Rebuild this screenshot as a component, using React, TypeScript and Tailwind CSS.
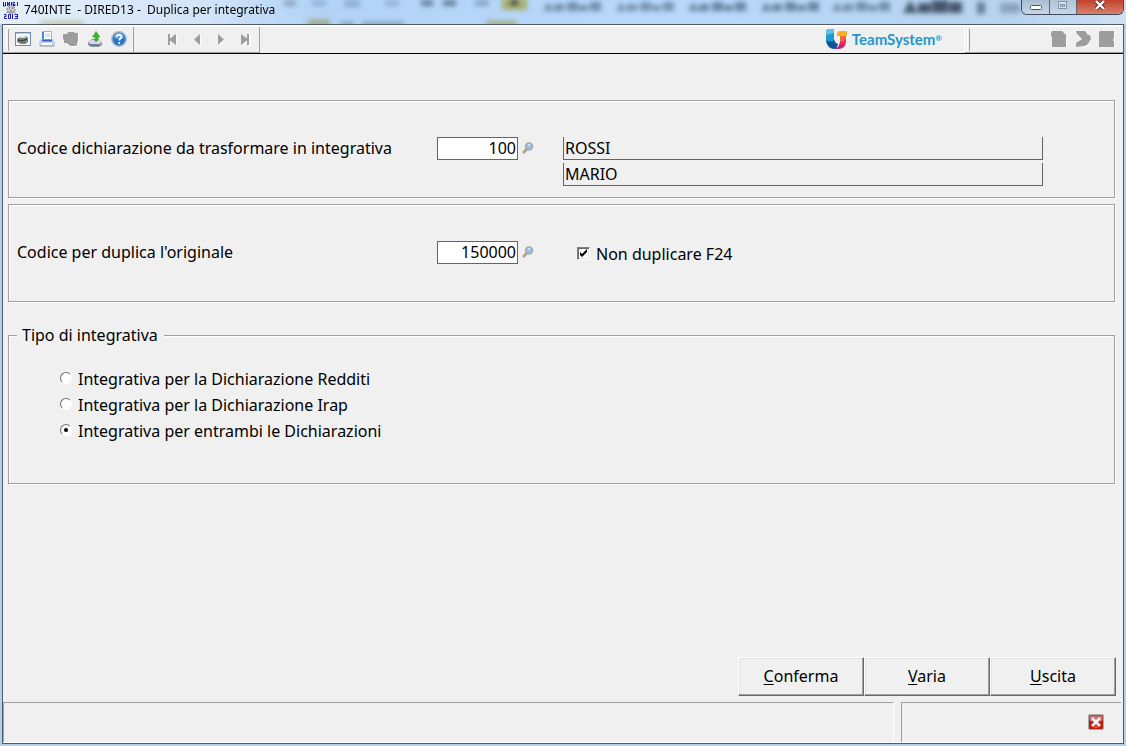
import React, { useState } from "react";

type SvgProps = { children: React.ReactNode; size?: number };

function Glyph({ children, size = 16 }: SvgProps) {
  return (
    <svg width={size} height={size} viewBox={`0 0 ${size} ${size}`} aria-hidden="true">
      {children}
    </svg>
  );
}

function ToolButton({ label, children }: { label: string; children: React.ReactNode }) {
  return (
    <button type="button" aria-label={label} className="flex h-6 w-6 items-center justify-center">
      {children}
    </button>
  );
}

function AppIcon() {
  return (
    <svg width="16" height="18" viewBox="0 0 16 18" aria-hidden="true">
      <rect width="16" height="18" fill="#e8f0fa" />
      <path d="M.5 1v4h2V1M4.500 5V1l2 4V1M8.500 1v4M12 1.500h-2v2h2v1h-2M14.500 1v4" stroke="#1a1aae" fill="none" />
      <circle cx="8" cy="8.500" r="4" fill="#c9c9c9" stroke="#777" strokeDasharray="2 1" />
      <path d="M6 7h1M9 7h1M7 10h2" stroke="#555" />
      <path d="M3 12l2-1h6l2 1" stroke="#999" fill="none" />
      <path d="M1 13.500h2v2H1.500v2H4M5.500 13.500h2v4h-2zM9.500 13v5M11.500 13.500h3v4h-3M12 15.500h2" stroke="#1616c4" fill="none" />
    </svg>
  );
}

function TitleBackdrop() {
  return (
    <svg className="absolute inset-0 h-full w-full" viewBox="0 0 1126 24" preserveAspectRatio="none" aria-hidden="true">
      <defs>
        <linearGradient id="sky" x1="0" x2="1" y1="0" y2="0">
          <stop offset="0" stopColor="#e4effb" />
          <stop offset=".18" stopColor="#d3e4f7" />
          <stop offset=".28" stopColor="#b3d3f6" />
          <stop offset=".6" stopColor="#b8d9fb" />
          <stop offset=".9" stopColor="#b8d3ef" />
          <stop offset="1" stopColor="#cfe0f2" />
        </linearGradient>
        <filter id="soft" x="-20%" y="-100%" width="140%" height="300%">
          <feGaussianBlur stdDeviation="2.500" />
        </filter>
      </defs>
      <rect width="1126" height="24" fill="url(#sky)" />
      <g filter="url(#soft)" fill="#5b7590">
        <rect x="284" y="0" width="12" height="6" opacity=".5" />
        <rect x="312" y="0" width="14" height="6" opacity=".35" />
        <rect x="344" y="0" width="16" height="7" opacity=".4" />
        <rect x="385" y="0" width="14" height="6" opacity=".35" />
        <rect x="421" y="0" width="12" height="6" opacity=".9" />
        <rect x="443" y="0" width="13" height="6" opacity=".9" />
        <rect x="475" y="0" width="14" height="6" opacity=".5" />
        <rect x="502" y="-2" width="25" height="12" fill="#a9ad6d" />
        <rect x="510" y="-1" width="8" height="7" fill="#455040" />
        <rect x="40" y="21" width="44" height="5" fill="#a9ad6d" opacity=".6" />
        <rect x="308" y="20" width="22" height="6" fill="#a0a878" />
        <rect x="340" y="22" width="14" height="4" opacity=".6" />
        <rect x="362" y="22" width="42" height="4" opacity=".6" />
        <rect x="486" y="21" width="31" height="6" fill="#a9ad7d" />
        <path d="M543 11l5-9 6 9zM554 4h10v7h-10zM567 2h11v9h-11zM579 5h9v6h-9zM590 2h11v9h-11z" opacity=".75" />
        <path d="M616 11l5-9 6 9zM627 4h10v7h-10zM640 2h11v9h-11zM652 5h9v6h-9zM663 2h11v9h-11z" opacity=".7" />
        <path d="M688 11l5-9 6 9zM699 4h10v7h-10zM712 2h11v9h-11zM724 5h9v6h-9zM735 2h11v9h-11z" opacity=".85" />
        <path d="M761 11l5-9 6 9zM772 4h10v7h-10zM785 2h11v9h-11zM797 5h9v6h-9zM808 2h11v9h-11z" opacity=".85" />
        <path d="M832 11l5-9 6 9zM843 4h10v7h-10zM856 2h11v9h-11zM868 5h9v6h-9zM879 2h11v9h-11z" opacity=".75" />
        <path d="M903 13l7-13 8 13zM918 3h13v10h-13zM932 0h16v13h-16zM949 2h13v11h-13z" fill="#34485c" opacity=".9" />
        <rect x="977" y="2" width="8" height="12" opacity=".9" />
        <rect x="1000" y="3" width="20" height="10" opacity=".5" />
      </g>
    </svg>
  );
}

function TitleBar() {
  return (
    <header className="relative flex h-6 shrink-0 items-start justify-between overflow-hidden">
      <TitleBackdrop />
      <div className="relative flex items-center gap-[5px] pl-[3px]">
        <AppIcon />
        <h1 className="whitespace-pre text-xs leading-5">{"740INTE  - DIRED13 -  Duplica per integrativa"}</h1>
      </div>
      <div className="relative mr-0.5 flex h-[15px] overflow-hidden rounded-b-md border border-t-0 border-[#3f4a58]">
        <button type="button" aria-label="Riduci a icona" className="flex w-7 justify-center border-r border-[#5a6573] bg-linear-to-b from-[#a9bdd3] to-[#c6d7e8]">
          <svg width="14" height="14" aria-hidden="true"><rect x="1.500" y="5.500" width="11" height="4" rx="1" fill="#fff" stroke="#4c5363" /></svg>
        </button>
        <button type="button" aria-label="Ingrandisci" className="flex w-[27px] justify-center border-r border-[#5a6573] bg-linear-to-b from-[#b2c4d8] to-[#c6d7e8]">
          <svg width="14" height="14" aria-hidden="true"><rect x="2.500" y="1.500" width="8" height="7" fill="#d9e1ea" stroke="#8592a1" /><rect x="4.500" y="4.500" width="4" height="2" fill="#b6c5d6" stroke="#8592a1" /></svg>
        </button>
        <button type="button" aria-label="Chiudi" className="flex w-[46px] justify-center bg-linear-to-b from-[#c2402b] to-[#d8806c]">
          <svg width="14" height="14" viewBox="0 0 14 14" aria-hidden="true"><path d="M3 1l8 8M11 1l-8 8" stroke="#5a2a2a" strokeWidth="4" /><path d="M3 1l8 8M11 1l-8 8" stroke="#fff" strokeWidth="2.400" /></svg>
        </button>
      </div>
    </header>
  );
}

function Separator() {
  return <div className="h-[22px] w-[3px] border-r border-[#a0a0a0] border-l border-l-white" />;
}

function Toolbar() {
  return (
    <div className="flex h-[29px] shrink-0 items-stretch justify-between border-t-2 border-b border-t-white border-b-black">
      <div className="flex items-center border-r border-b border-[#a0a0a0] pr-0.5 pl-[3px]">
        <Separator />
        <div className="ml-0.5 flex pb-px">
          <ToolButton label="Anteprima">
            <Glyph>
              <rect x=".5" y="1.500" width="15" height="13" fill="#f8fbfd" stroke="#6e8ca6" />
              <path d="M1 2.500h14" stroke="#b8d0e4" />
              <path d="M2 8l3-2 2-1h4l2 2v4l-3 2H6l-4-2z" fill="#77797b" />
              <path d="M6 5h4l1 2H5z" fill="#dde5e8" />
              <path d="M3 9l4 1 5-2" stroke="#303436" fill="none" />
              <circle cx="11.500" cy="10" r="1" fill="#59a35c" />
            </Glyph>
          </ToolButton>
          <ToolButton label="Stampa">
            <Glyph>
              <path d="M3.500.5h9v8h-9z" fill="#fff" stroke="#a3b4cf" />
              <path d="M3 1h2v7H3z" fill="#4d86cb" />
              <path d="M6 3h5M6 5h5" stroke="#b9c9e0" />
              <path d="M2 8h12l2 3v4H0v-4z" fill="#c7d2e2" />
              <path d="M3 9.500h10" stroke="#2f69c4" strokeWidth="2" />
              <path d="M1 15h14" stroke="#8793a5" />
              <path d="M3 12h10v2H3z" fill="#fff" />
            </Glyph>
          </ToolButton>
          <ToolButton label="Stampa rapida">
            <Glyph>
              <path d="M1 5l5-1 1-2h5l1 1h3v8l-2 1v2l-2 2H8l-2-2H4l-3-4z" fill="#fff" />
              <path d="M0 3h4l1-2h6l1 1h3v8l-1 2v2l-2 1H8l-2-1-1-1-2-1H1V9L0 8z" fill="#9d9d9d" />
            </Glyph>
          </ToolButton>
          <ToolButton label="Esporta">
            <Glyph>
              <path d="M1 11l4-3h6l4 3v3l-3 2H4l-3-2z" fill="#8795a3" />
              <path d="M1 11l3-2h8l3 2-3 2H4z" fill="#d5dde3" />
              <path d="M3 14h9" stroke="#526475" />
              <path d="M8 10V6H5.500L9 .5 13 6h-2v3l-2 2z" fill="#32b829" stroke="#4c9b48" strokeWidth=".6" />
            </Glyph>
          </ToolButton>
          <ToolButton label="Aiuto">
            <Glyph>
              <circle cx="8" cy="8" r="7.200" fill="#2877c4" stroke="#a8b9ca" strokeWidth="1.500" />
              <path d="M3 7a5 5 0 0 1 10 0q-5 2-10 0z" fill="#5fa4df" />
              <path d="M5.500 6c0-3 5-3 5 0 0 1.500-2.300 1.500-2.300 3.500" stroke="#fff" strokeWidth="1.800" fill="none" />
              <circle cx="8.200" cy="12" r="1.100" fill="#fff" />
            </Glyph>
          </ToolButton>
        </div>
        <div className="ml-0.5 h-full border-l border-[#a0a0a0]" />
        <div className="ml-[27px] flex pb-px">
          <ToolButton label="Primo">
            <Glyph><path d="M4 4h2v4l6-5v11l-6-4v4H4z" fill="#fff" /><path d="M3 3h2v4.500L11 3v11L5 9.500V14H3z" fill="#9d9d9d" /></Glyph>
          </ToolButton>
          <ToolButton label="Precedente">
            <Glyph><path d="M12 4v11L6 9z" fill="#fff" /><path d="M11 3v11L5 8.500z" fill="#9d9d9d" /></Glyph>
          </ToolButton>
          <ToolButton label="Successivo">
            <Glyph><path d="M6 4v11l6-6z" fill="#fff" /><path d="M5 3v11l6-5.500z" fill="#9d9d9d" /></Glyph>
          </ToolButton>
          <ToolButton label="Ultimo">
            <Glyph><path d="M5 4l6 4V4h3v11h-3v-4l-6 4z" fill="#fff" /><path d="M4 3l6 4.500V3h2v11h-2V9.500L4 14z" fill="#9d9d9d" /></Glyph>
          </ToolButton>
        </div>
      </div>
      <div className="flex items-stretch">
        <div className="flex items-center gap-[5px] pr-[22px] pb-0.5">
          <svg width="21" height="20" viewBox="0 0 21 20" aria-hidden="true">
            <path d="M0 3q0-3 3-3h5v9q0 5 4 6l-2 5Q0 20 0 10z" fill="#1f9bd2" />
            <path d="M0 11q4 3 8 0 1 3 4 4l-2 5Q1 20 0 11z" fill="#0f5498" />
            <path d="M3 0h5v4L0 6V3q0-3 3-3z" fill="#60bfe2" />
            <path d="M11 7V5q0-3 3-3h7v5z" fill="#fbb024" />
            <path d="M14 7h6v5q0 8-8 8H9q5-3 5-8z" fill="#e92766" />
            <path d="M14 7h6v2l-3 4-3-1z" fill="#f26a3c" />
            <path d="M9 20q4-1 5-5l4 2q-3 3-9 3z" fill="#b3277d" />
          </svg>
          <span className="font-[Lato] text-[15px] font-bold leading-5 text-[#2596c8]">TeamSystem<sup className="text-[8px]">®</sup></span>
        </div>
        <div className="flex w-[159px] items-center justify-between border-b border-l border-b-[#a0a0a0] border-l-white pr-1 pl-0.5">
          <Separator />
          <div className="flex pb-px">
            <ToolButton label="Documento">
              <Glyph><path d="M1 3h10l5 5v9H1z" fill="#fff" /><path d="M1 0h10l4 4v12H1V6L0 5V2z" fill="#9d9d9d" /></Glyph>
            </ToolButton>
            <ToolButton label="Avanti">
              <Glyph><path d="M1 16l5-6-4-7 8-2 7 7-3 6-4 2z" fill="#fff" /><path d="M1 0h9l3 4h2l1 4-3 5-3 2-9 1v-4l6-4-5-5z" fill="#9d9d9d" /></Glyph>
            </ToolButton>
            <ToolButton label="Elenco">
              <Glyph><path d="M2 1h14v7l-1 1 1 2v5H2z" fill="#fff" /><path d="M0 1l1-1h14v7l-1 2 1 2v5H0z" fill="#9d9d9d" /></Glyph>
            </ToolButton>
          </div>
        </div>
      </div>
    </div>
  );
}

function LookupButton({ label }: { label: string }) {
  return (
    <button type="button" aria-label={label} className="ml-1 h-3 w-3">
      <Glyph size={12}>
        <path d="M5 7L1 11" stroke="#b59d80" strokeWidth="2.500" />
        <circle cx="7" cy="4.500" r="3.500" fill="#9dbddb" stroke="#9fabbb" strokeWidth="1.500" />
        <path d="M6 3.500l2-1" stroke="#d6ecfa" strokeWidth="1.500" />
      </Glyph>
    </button>
  );
}

function CodeField({ id, label, initial }: { id: string; label: string; initial: string }) {
  const [value, setValue] = useState(initial);
  return (
    <div className="flex h-[23px] items-start">
      <label htmlFor={id} className="w-[420px] leading-[22px]">{label}</label>
      <input
        id={id}
        value={value}
        onChange={(e) => setValue(e.target.value)}
        className="h-[23px] w-[81px] border border-[#646464] bg-white px-px pb-0.5 text-right outline-none"
      />
      <div className="flex h-[21px] items-center">
        <LookupButton label={`Cerca ${label}`} />
      </div>
    </div>
  );
}

function NameField({ label, value }: { label: string; value: string }) {
  return (
    <input
      aria-label={label}
      readOnly
      value={value}
      className="h-[23px] w-full border border-t-0 border-[#646464] px-px outline-none"
    />
  );
}

const panel = "border border-[#a0a0a0] shadow-[1px_1px_0_#fff,inset_1px_1px_0_#fff]";

const kinds = [
  "Integrativa per la Dichiarazione Redditi",
  "Integrativa per la Dichiarazione Irap",
  "Integrativa per entrambi le Dichiarazioni",
];

const actions = ["Conferma", "Varia", "Uscita"];

export default function App() {
  const [skipF24, setSkipF24] = useState(true);
  const [kind, setKind] = useState(2);

  return (
    <div className="flex min-h-screen flex-col bg-[#b5cfe9] font-['Noto_Sans',sans-serif] text-base leading-5 text-black">
      <TitleBar />
      <div className="mx-0.5 mb-0.5 flex grow flex-col border border-[#4f5b69] bg-[#f0f0f0]">
        <Toolbar />
        <main className="flex grow flex-col pt-[46px] pr-2 pl-[5px]">
          <section className={`${panel} flex h-[98px] items-start pt-9 pl-2`}>
            <CodeField id="source" label="Codice dichiarazione da trasformare in integrativa" initial="100" />
            <div className="ml-[29px] flex w-[480px] flex-col gap-[3px]">
              <NameField label="Cognome" value="ROSSI" />
              <NameField label="Nome" value="MARIO" />
            </div>
          </section>

          <section className={`${panel} mt-1.5 flex h-[98px] items-start pt-9 pl-2`}>
            <CodeField id="copy" label="Codice per duplica l'originale" initial="150000" />
            <label className="ml-[43px] flex h-[26px] items-center gap-1.5">
              <input
                type="checkbox"
                checked={skipF24}
                onChange={(e) => setSkipF24(e.target.checked)}
                className="peer sr-only"
              />
              <span className="mb-0.5 flex h-[13px] w-[13px] items-center justify-center border border-t-[#808080] border-r-white border-b-white border-l-[#808080] bg-white shadow-[inset_1px_1px_0_#696969,inset_-1px_-1px_0_#e3e3e3] peer-checked:[&>svg]:visible">
                <svg className="invisible" width="9" height="9" viewBox="0 0 9 9" aria-hidden="true"><path d="M1 3v3l2 2 5-5V0L3 5z" fill="#000" /></svg>
              </span>
              Non duplicare F24
            </label>
          </section>

          <fieldset className={`${panel} mt-[23px] h-[159px] min-w-0`}>
            <legend className="ml-2 h-5 bg-[#f0f0f0] pr-1.5 pl-[5px]">Tipo di integrativa</legend>
            <div className="flex flex-col pt-[21px] pl-[51px]">
              {kinds.map((text, i) => (
                <label key={text} className="flex h-[26px] items-center gap-1.5">
                  <input
                    type="radio"
                    name="kind"
                    checked={kind === i}
                    onChange={() => setKind(i)}
                    className="peer sr-only"
                  />
                  <span className="mb-0.5 flex h-3 w-3 items-center justify-center rounded-full border border-t-[#707070] border-r-white border-b-white border-l-[#707070] bg-white peer-checked:[&>i]:visible">
                    <i className="invisible h-1 w-1 rounded-full bg-black" />
                  </span>
                  {text}
                </label>
              ))}
            </div>
          </fieldset>

          <div className="mt-auto mb-1.5 -mr-px flex justify-end">
            {actions.map((name) => (
              <button
                key={name}
                type="button"
                className="h-[39px] w-[126px] border border-t-white border-r-[#696969] border-b-[#696969] border-l-white pb-0.5 shadow-[inset_-1px_-1px_0_#a0a0a0,inset_1px_1px_0_#e3e3e3]"
              >
                <span className="underline underline-offset-2">{name[0]}</span>
                {name.slice(1)}
              </button>
            ))}
          </div>
        </main>
        <footer className="flex h-[41px] shrink-0 gap-[7px] border-b border-white pr-0.5">
          <div className="grow border-t border-l border-[#a0a0a0] border-r border-r-white" />
          <div className="flex w-[220px] items-center justify-end border-t border-l border-[#a0a0a0] pr-[17px] pb-0.5">
            <button type="button" aria-label="Annulla" className="h-4 w-4">
              <Glyph>
                <rect x=".5" y=".5" width="15" height="15" rx="1.500" fill="#b71f18" stroke="#a8a8a8" />
                <path d="M1.500 1.500h13v5q-7 3-13 0z" fill="#cf7272" />
                <path d="M5 14h6l-3-4z" fill="#ef4a12" />
                <path d="M4 4l8 8M12 4l-8 8" stroke="#f4f4f4" strokeWidth="2.500" />
              </Glyph>
            </button>
          </div>
        </footer>
      </div>
    </div>
  );
}
